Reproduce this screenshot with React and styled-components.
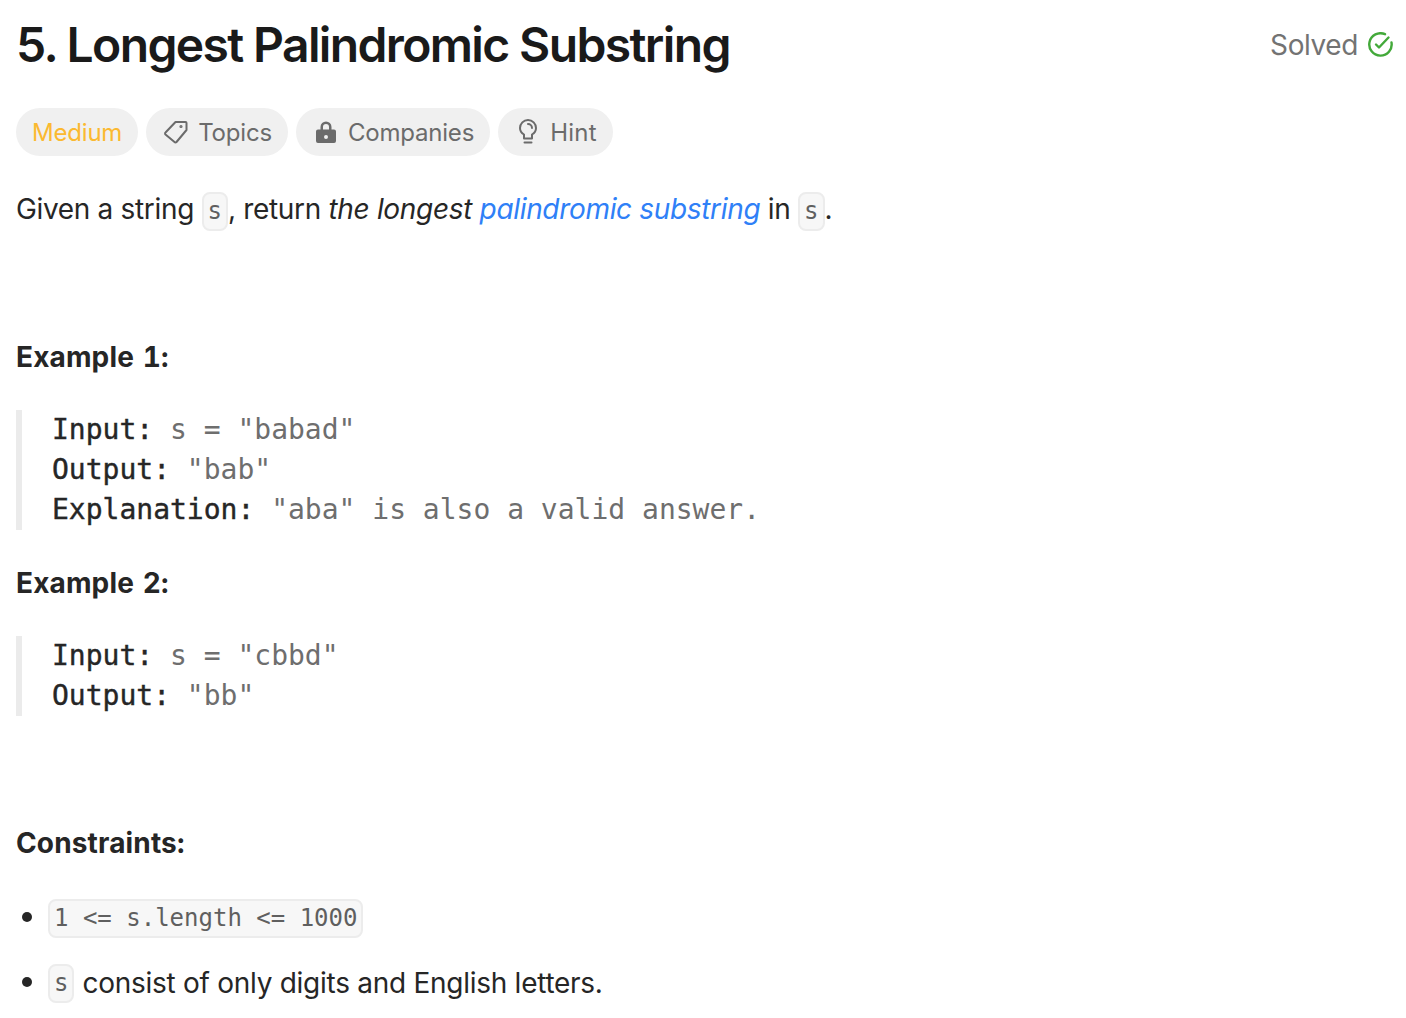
import styled, { createGlobalStyle } from 'styled-components';

const GlobalStyle = createGlobalStyle`
  html, body { margin: 0; padding: 0; background: #fff; }
  body { font-family: Inter, "Liberation Sans", sans-serif; color: #262626; }
`;

const Page = styled.div`
  width: 1406px;
  height: 1018px;
  overflow: hidden;
  box-sizing: border-box;
  padding: 0 13px 0 16px;
`;

const Header = styled.div`
  display: flex;
  align-items: center;
  justify-content: space-between;
  height: 90px;
`;

const Title = styled.h1`
  margin: 0;
  font-size: 48px;
  line-height: 56px;
  font-weight: 600;
  letter-spacing: -1.63px;
  color: #1a1a1a;
`;

const Solved = styled.div`
  display: flex;
  align-items: center;
  gap: 9px;
  font-size: 28px;
  letter-spacing: -0.4px;
  color: #737373;
`;

const Tags = styled.div`
  display: flex;
  gap: 8px;
  margin-top: 18px;
`;

const Tag = styled.div`
  display: flex;
  align-items: center;
  gap: 10px;
  height: 48px;
  padding: 0 16px;
  border-radius: 24px;
  background: #f0f0f0;
  font-size: 24px;
  letter-spacing: ${(p) => p.$spacing || '-0.2px'};
  color: ${(p) => p.$color || '#6b6b6b'};
`;

const Paragraph = styled.p`
  margin: 30px 0 0;
  font-size: 28px;
  line-height: 46px;
  letter-spacing: -0.33px;
  color: #262626;
`;

const Link = styled.em`
  color: #2f80f7;
`;

const Code = styled.code`
  display: inline-block;
  box-sizing: border-box;
  padding: 0 4px;
  border: 2px solid #ececec;
  border-radius: 8px;
  background: #f7f7f7;
  font-family: "DejaVu Sans Mono", monospace;
  font-size: 24px;
  letter-spacing: 0;
  line-height: 35px;
  color: #5f5f5f;
  vertical-align: 0;
`;

const ExampleTitle = styled.div`
  margin-top: ${(p) => p.$top}px;
  font-size: 28px;
  line-height: 38px;
  font-weight: 700;
  letter-spacing: 0.15px;
  word-spacing: 1px;
  font-variant-numeric: tabular-nums;
  color: #262626;
`;

const Pre = styled.pre`
  margin: 34px 0 0;
  padding: 0 0 0 30px;
  border-left: 6px solid #ebebeb;
  font-family: "DejaVu Sans Mono", monospace;
  font-size: 28px;
  line-height: 40px;
  color: #6e6e6e;
`;

const Label = styled.span`
  color: #262626;
  -webkit-text-stroke: 0.4px #262626;
`;

const List = styled.ul`
  margin: 36px 0 0;
  padding: 0;
  list-style: none;
  display: flex;
  flex-direction: column;
  gap: 25px;
`;

const Item = styled.li`
  display: flex;
  align-items: center;
  gap: 8px;
  height: 40px;
  padding-left: 32px;
  position: relative;
  font-size: 28px;
  letter-spacing: -0.27px;
  &::before {
    content: '';
    position: absolute;
    left: 6px;
    top: 14px;
    width: 10px;
    height: 10px;
    border-radius: 50%;
    background: #262626;
  }
`;

const CheckIcon = () => (
  <svg width="26" height="26" viewBox="0 1 26 26" fill="none" stroke="#43a93a" strokeWidth="2.4" strokeLinecap="round" strokeLinejoin="round">
    <path d="M24.500 11.500A11.200 11.200 0 1 1 18 3.200" />
    <path d="M9 13.500l3 3L21.500 6.500" />
  </svg>
);

const TagIcon = () => (
  <svg width="26" height="26" viewBox="0 0 26 26" fill="none" stroke="#6b6b6b" strokeWidth="2" strokeLinejoin="round">
    <path d="M13.500 3h10a1 1 0 0 1 1 1v7L14.500 23a1.400 1.400 0 0 1-2 0L3.500 15.500a1.400 1.400 0 0 1 0-2z" />
    <circle cx="19" cy="7.500" r="0.6" fill="#6b6b6b" />
  </svg>
);

const LockIcon = () => (
  <svg width="26" height="26" viewBox="0 0 26 26" fill="#6b6b6b">
    <path fillRule="evenodd" d="M8.500 10.500V8a5.500 5.500 0 0 1 11 0v2.500H22a2 2 0 0 1 2 2V22a2 2 0 0 1-2 2H6a2 2 0 0 1-2-2v-9.500a2 2 0 0 1 2-2zm2.500 0h6V8a3 3 0 0 0-6 0zm3 5.500a2 2 0 1 0 0 4 2 2 0 0 0 0-4z" />
  </svg>
);

const BulbIcon = () => (
  <svg width="26" height="26" viewBox="0 0 26 26" fill="none" stroke="#6b6b6b" strokeWidth="2" strokeLinecap="round" strokeLinejoin="round">
    <path d="M10 19.500v-4C7.500 14 6 11.800 6 9a8 8 0 0 1 16 0c0 2.800-1.500 5-4 6.500v4z" />
    <path d="M10.500 23.500h7" />
    <path d="M14 5a4 4 0 0 1 4 4" />
  </svg>
);

export default function App() {
  return (
    <Page>
      <GlobalStyle />
      <Header>
        <Title>5. Longest Palindromic Substring</Title>
        <Solved>
          Solved
          <CheckIcon />
        </Solved>
      </Header>
      <Tags>
        <Tag $color="#fbb931">Medium</Tag>
        <Tag><TagIcon />Topics</Tag>
        <Tag><LockIcon />Companies</Tag>
        <Tag $spacing="0.3px"><BulbIcon />Hint</Tag>
      </Tags>
      <Paragraph>
        Given a string <Code>s</Code>, return <em>the longest </em>
        <Link>palindromic substring</Link> in <Code>s</Code>.
      </Paragraph>
      <ExampleTitle $top={106}>Example 1:</ExampleTitle>
      <Pre>
        <Label>Input:</Label> s = "babad"{'\n'}
        <Label>Output:</Label> "bab"{'\n'}
        <Label>Explanation:</Label> "aba" is also a valid answer.
      </Pre>
      <ExampleTitle $top={34}>Example 2:</ExampleTitle>
      <Pre>
        <Label>Input:</Label> s = "cbbd"{'\n'}
        <Label>Output:</Label> "bb"
      </Pre>
      <ExampleTitle $top={108}>Constraints:</ExampleTitle>
      <List>
        <Item><Code>1 &lt;= s.length &lt;= 1000</Code></Item>
        <Item><Code>s</Code>consist of only digits and English letters.</Item>
      </List>
    </Page>
  );
}
